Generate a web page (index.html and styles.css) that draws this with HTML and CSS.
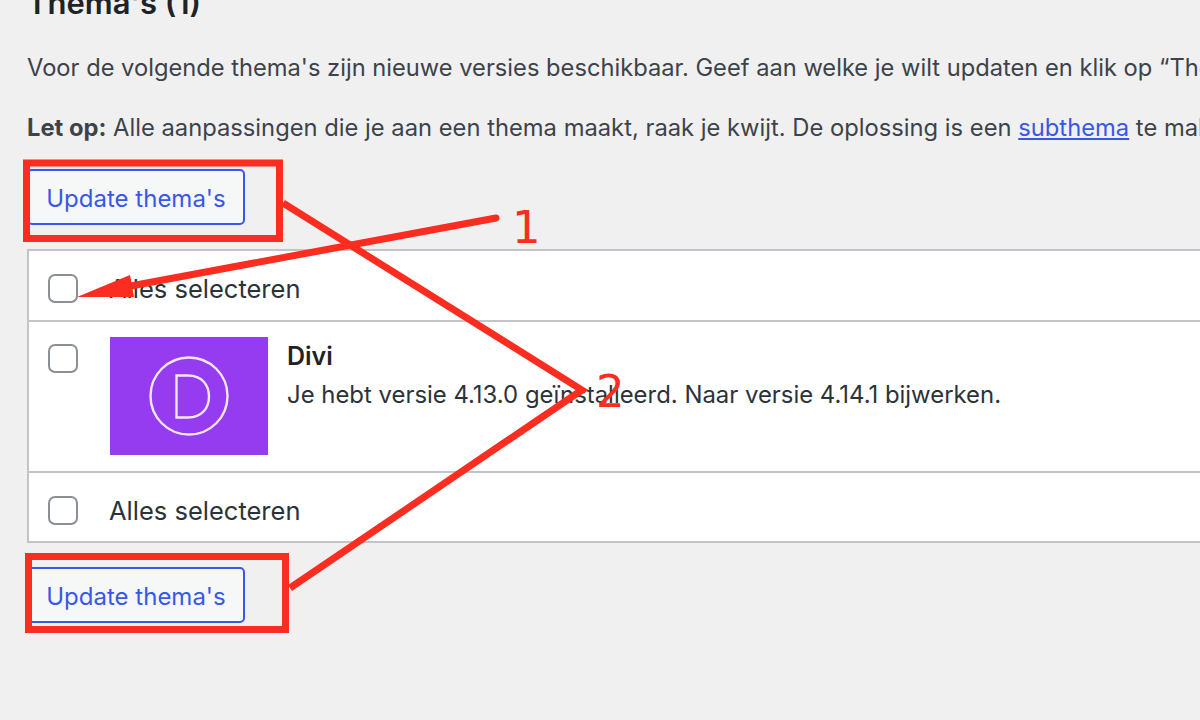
FILE: index.html
```html
<!DOCTYPE html>
<html lang="nl">
<head>
<meta charset="utf-8">
<title>Thema's</title>
<link rel="stylesheet" href="styles.css">
</head>
<body>
<main class="page">
  <h2 class="title">Thema's (1)</h2>
  <p class="intro">Voor de volgende thema's zijn nieuwe versies beschikbaar. Geef aan welke je wilt updaten en klik op “Thema's updaten”.</p>
  <p class="note"><strong>Let op:</strong> Alle aanpassingen die je aan een thema maakt, raak je kwijt. De oplossing is een <a href="#">subthema</a> te maken.</p>
  <button class="btn btn-top">Update thema's</button>
  <div class="table">
    <div class="row row-head"><span class="check"></span><span class="label">Alles selecteren</span></div>
    <div class="row row-theme">
      <span class="check"></span>
      <div class="thumb">
        <svg class="thumb-logo" viewBox="0 0 80 80" width="80" height="80">
          <circle cx="40" cy="40" r="38.500" fill="none" stroke="#f3e6fd" stroke-width="2.400"/>
          <path d="M27.500 19.500H39C53 19.500 60 29 60 40.500C60 52 53 61.500 39 61.500H27.500Z" fill="none" stroke="#f3e6fd" stroke-width="2.400"/>
        </svg>
      </div>
      <div class="info">
        <div class="name">Divi</div>
        <div class="desc">Je hebt versie 4.13.0 geïnstalleerd. Naar versie 4.14.1 bijwerken.</div>
      </div>
    </div>
    <div class="row row-foot"><span class="check"></span><span class="label">Alles selecteren</span></div>
  </div>
  <button class="btn btn-bottom">Update thema's</button>
</main>
<svg class="marks" viewBox="0 0 1200 720" width="1200" height="720">
  <rect x="26.500" y="163" width="253" height="75.500" fill="none" stroke="#fb2c20" stroke-width="7"/>
  <rect x="28.500" y="556.500" width="257" height="73" fill="none" stroke="#fb2c20" stroke-width="7"/>
  <path d="M283 203L582 390L290 588" fill="none" stroke="#fb2c20" stroke-width="7"/>
  <path d="M496 218L120 288" fill="none" stroke="#fb2c20" stroke-width="7" stroke-linecap="round"/>
  <path d="M77 297L130 275L134 297Z" fill="#fb2c20"/>
</svg>
<span class="num num-one">1</span>
<span class="num num-two">2</span>
</body>
</html>
```
FILE: styles.css
```css
* { box-sizing: border-box; }
html, body { margin: 0; height: 720px; overflow: hidden; }
body { background: #f0f0f1; font-family: Inter, "Liberation Sans", sans-serif; color: #3c434a; position: relative; }
.page { padding-left: 27px; width: 1500px; margin-top: -16px; }
.title { margin: 0; font-size: 31px; line-height: 38px; font-weight: 600; color: #1d2327; }
.intro { margin: 30px 0 0; font-size: 23.700px; line-height: 32px; white-space: nowrap; }
.note { margin: 28px 0 0; font-size: 23.750px; line-height: 32px; white-space: nowrap; }
.note a { color: #3858e9; }
.btn { display: block; width: 218px; height: 56px; padding: 2px 0 0; font: 400 24px Inter, "Liberation Sans", sans-serif; color: #3858e9; background: #f6f7f7; border: 2px solid #3858e9; border-radius: 5px; }
.btn-top { margin-top: 25px; }
.btn-bottom { margin-top: 24px; }
.table { margin-top: 24px; width: 1300px; background: #fff; border: 2px solid #c3c4c7; color: #2c3338; }
.row { display: flex; font-size: 25.500px; padding-left: 19px; }
.row-head { height: 71px; padding-top: 6px; align-items: center; border-bottom: 2px solid #c3c4c7; }
.row-theme { height: 151px; padding-top: 15px; border-bottom: 2px solid #c3c4c7; }
.row-foot { height: 68px; padding-top: 6px; align-items: center; }
.check { flex: none; width: 30px; height: 29px; background: #fff; border: 2px solid #8c8f94; border-radius: 7px; }
.row-theme .check { margin-top: 7px; }
.label { margin-left: 31px; }
.thumb { flex: none; width: 158px; height: 118px; margin-left: 32px; background: #963cf0; display: flex; align-items: center; justify-content: center; }
.info { margin-left: 19px; }
.name { font-size: 25px; line-height: 38px; font-weight: 600; color: #1d2327; }
.desc { font-size: 23.900px; line-height: 40px; white-space: nowrap; }
.marks { position: absolute; left: 0; top: 0; }
.num { position: absolute; color: #fb2c20; font-family: "DejaVu Sans", sans-serif; font-size: 45px; line-height: 50px; }
.num-one { left: 512px; top: 203px; }
.num-two { left: 596px; top: 367px; }
```
